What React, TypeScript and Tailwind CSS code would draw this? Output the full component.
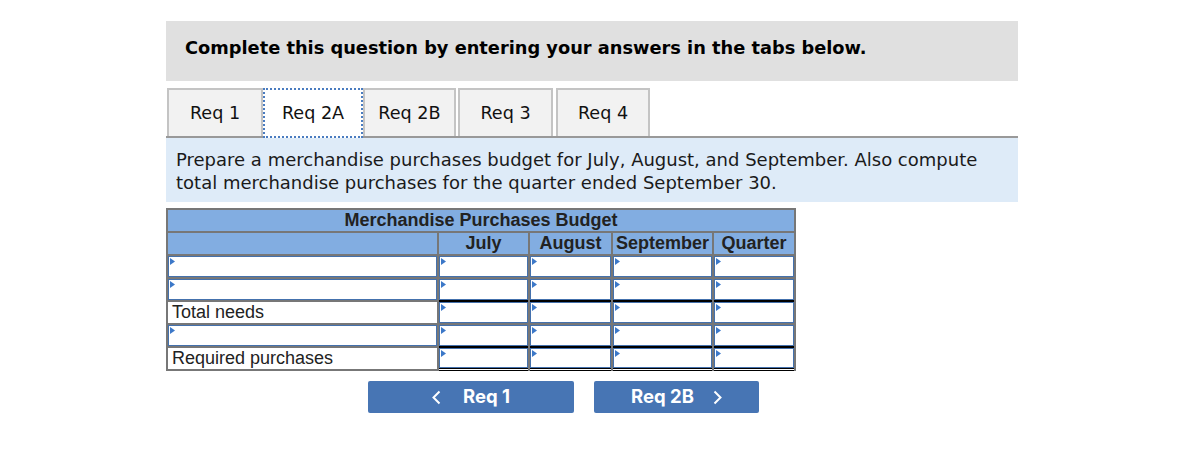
import React from "react";

const verdana = { fontFamily: "'DejaVu Sans', Verdana, sans-serif" };
const arial = { fontFamily: "'Liberation Sans', Arial, sans-serif" };

function Flag() {
  return (
    <svg className="absolute left-[1px] top-[1px]" width="5" height="7" viewBox="0 0 5 7">
      <polygon points="0,0 5,3.5 0,7" fill="#3c78c8" />
    </svg>
  );
}

function InputCell({ extra = "" }: { extra?: string }) {
  return (
    <div className={`bg-white ${extra}`}>
      <div className="relative h-full border border-[#4471ad] bg-white">
        <Flag />
      </div>
    </div>
  );
}

function LabelCell({ text }: { text: string }) {
  return (
    <div className="flex items-center bg-white pl-[4px] text-[18px] text-[#222]" style={arial}>
      {text}
    </div>
  );
}

export default function App() {
  const tabs = [
    { label: "Req 1", cls: "ml-[1px] w-[96px]", active: false },
    { label: "Req 2A", cls: "w-[100px]", active: true },
    { label: "Req 2B", cls: "w-[93px]", active: false },
    { label: "Req 3", cls: "ml-[2px] w-[95px]", active: false },
    { label: "Req 4", cls: "ml-[3px] w-[94px]", active: false },
  ];
  const numCols = [0, 1, 2, 3];
  return (
    <div className="min-h-[450px] bg-white">
      <div className="ml-[166px] w-[852px] pt-[21px]">
        <div className="flex h-[60px] items-center bg-[#e0e0e0] pb-[6px] pl-[19px]">
          <span className="text-[17.8px] font-bold text-black" style={verdana}>
            Complete this question by entering your answers in the tabs below.
          </span>
        </div>

        <div className="mt-[7px] flex items-end border-b-2 border-[#999]">
          {tabs.map((t) =>
            t.active ? (
              <div
                key={t.label}
                className={`${t.cls} -mb-[2px] flex h-[50px] items-center justify-center border-2 border-dotted border-[#4a7cc0] bg-white text-[17.6px] text-[#111]`}
                style={verdana}
              >
                {t.label}
              </div>
            ) : (
              <div
                key={t.label}
                className={`${t.cls} flex h-[48px] items-center justify-center border-x-2 border-t-2 border-[#c4c4c4] bg-[#f2f2f2] text-[17.6px] text-[#111]`}
                style={verdana}
              >
                {t.label}
              </div>
            )
          )}
        </div>

        <div className="h-[64px] bg-[#deebf8] px-[10px] pt-[10px] text-[18px] leading-[23px] text-[#1a1a1a]" style={verdana}>
          Prepare a merchandise purchases budget for July, August, and September. Also compute
          <br />
          total merchandise purchases for the quarter ended September 30.
        </div>

        <div
          className="mt-[6px] grid w-[630px] grid-cols-[269px_89px_81px_99px_80px] grid-rows-[21px_21px_21px_21px_21px_21px_23px] gap-[2px] bg-[#777] px-[2px] pt-[2px]"
          style={arial}
        >
          <div className="col-span-5 flex items-center justify-center bg-[#82ade1] text-[18px] font-bold text-[#222]">
            Merchandise Purchases Budget
          </div>
          <div className="bg-[#82ade1]" />
          {["July", "August", "September", "Quarter"].map((m) => (
            <div key={m} className="flex items-center justify-center bg-[#82ade1] text-[18px] font-bold text-[#222]">
              {m}
            </div>
          ))}

          <InputCell />
          {numCols.map((i) => <InputCell key={"a" + i} />)}

          <InputCell />
          {numCols.map((i) => <InputCell key={"b" + i} />)}

          <LabelCell text="Total needs" />
          {numCols.map((i) => <InputCell key={"c" + i} extra="shadow-[0_-2px_0_#000]" />)}

          <InputCell />
          {numCols.map((i) => <InputCell key={"d" + i} />)}

          <div className="border-b-2 border-[#777] bg-white">
            <div className="flex h-full items-center bg-white pl-[4px] text-[18px] text-[#222]">Required purchases</div>
          </div>
          {numCols.map((i) => (
            <div key={"e" + i} className="border-b-[3px] border-double border-black bg-white shadow-[0_-2px_0_#000]">
              <div className="relative h-full border border-[#4471ad] bg-white">
                <Flag />
              </div>
            </div>
          ))}
        </div>

        <div className="ml-[202px] mt-[10px] flex gap-[20px]">
          <button className="flex h-[32px] w-[206px] items-center justify-center gap-[22px] rounded-[2px] bg-[#4775b4] text-[18.5px] font-bold text-white" style={{ fontFamily: "Inter, 'Liberation Sans', sans-serif" }}>
            <svg width="9" height="15" viewBox="0 0 9 15" fill="none">
              <path d="M7.5 1.5 L1.5 7.5 L7.5 13.5" stroke="white" strokeWidth="2" />
            </svg>
            <span>Req 1</span>
          </button>
          <button className="flex h-[32px] w-[165px] items-center justify-center gap-[19px] rounded-[2px] bg-[#4775b4] text-[18.5px] font-bold text-white" style={{ fontFamily: "Inter, 'Liberation Sans', sans-serif" }}>
            <span>Req 2B</span>
            <svg width="9" height="15" viewBox="0 0 9 15" fill="none">
              <path d="M1.5 1.5 L7.5 7.5 L1.5 13.5" stroke="white" strokeWidth="2" />
            </svg>
          </button>
        </div>
      </div>
    </div>
  );
}
